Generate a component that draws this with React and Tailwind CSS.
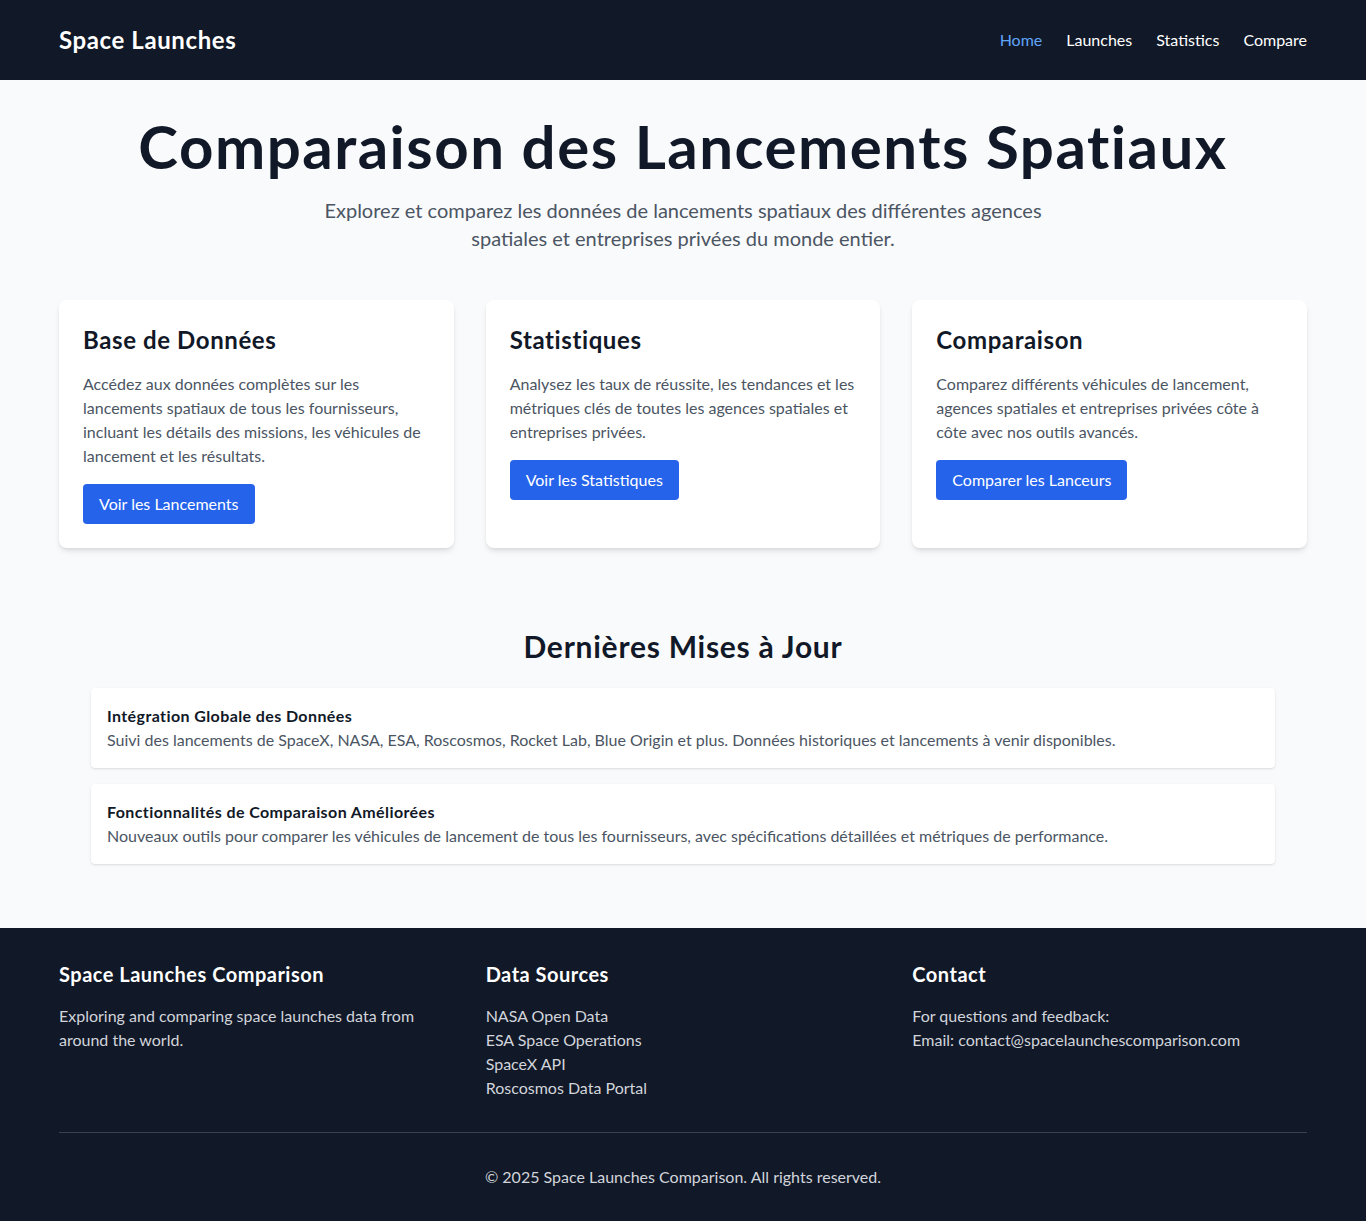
import React from 'react';

const features = [
  {
    title: 'Base de Données',
    text: 'Accédez aux données complètes sur les lancements spatiaux de tous les fournisseurs, incluant les détails des missions, les véhicules de lancement et les résultats.',
    cta: 'Voir les Lancements',
  },
  {
    title: 'Statistiques',
    text: 'Analysez les taux de réussite, les tendances et les métriques clés de toutes les agences spatiales et entreprises privées.',
    cta: 'Voir les Statistiques',
  },
  {
    title: 'Comparaison',
    text: 'Comparez différents véhicules de lancement, agences spatiales et entreprises privées côte à côte avec nos outils avancés.',
    cta: 'Comparer les Lanceurs',
  },
];

const updates = [
  {
    title: 'Intégration Globale des Données',
    text: 'Suivi des lancements de SpaceX, NASA, ESA, Roscosmos, Rocket Lab, Blue Origin et plus. Données historiques et lancements à venir disponibles.',
  },
  {
    title: 'Fonctionnalités de Comparaison Améliorées',
    text: 'Nouveaux outils pour comparer les véhicules de lancement de tous les fournisseurs, avec spécifications détaillées et métriques de performance.',
  },
];

function App() {
  return (
    <div className="min-h-screen flex flex-col bg-[#f9fafb] font-['Lato',sans-serif]">
      {/* Navbar */}
      <nav className="bg-[#111827] text-white">
        <div className="max-w-7xl mx-auto px-4 h-20 flex items-center justify-between">
          <a href="#" className="text-2xl font-bold tracking-wide">Space Launches</a>
          <div className="flex space-x-6">
            <a href="#" className="text-[#60a5fa]">Home</a>
            <a href="#" className="hover:text-[#60a5fa]">Launches</a>
            <a href="#" className="hover:text-[#60a5fa]">Statistics</a>
            <a href="#" className="hover:text-[#60a5fa]">Compare</a>
          </div>
        </div>
      </nav>

      <main className="flex-1 max-w-7xl w-full mx-auto px-4 pt-9 pb-16">
        {/* Hero */}
        <div className="text-center mb-12">
          <h1 className="text-6xl font-bold tracking-wide text-[#111827] mb-5">Comparaison des Lancements Spatiaux</h1>
          <p className="text-xl text-[#4b5563] max-w-3xl mx-auto">
            Explorez et comparez les données de lancements spatiaux des différentes agences spatiales et entreprises privées du monde entier.
          </p>
        </div>

        {/* Feature cards */}
        <div className="grid grid-cols-3 gap-8">
          {features.map((f) => (
            <div key={f.title} className="bg-white p-6 rounded-lg shadow-md">
              <h2 className="text-2xl font-bold tracking-wide text-[#111827] mb-4">{f.title}</h2>
              <p className="text-[#4b5563] mb-4">{f.text}</p>
              <a href="#" className="inline-block bg-[#2563eb] text-white px-4 py-2 rounded hover:bg-[#1d4ed8]">{f.cta}</a>
            </div>
          ))}
        </div>

        {/* Updates */}
        <section className="mt-20 px-8">
          <h2 className="text-3xl font-bold tracking-wide text-[#111827] text-center mb-6">Dernières Mises à Jour</h2>
          <div className="space-y-4">
            {updates.map((u) => (
              <div key={u.title} className="bg-white p-4 rounded shadow-sm">
                <h3 className="font-bold tracking-wide text-[#111827]">{u.title}</h3>
                <p className="text-[#4b5563]">{u.text}</p>
              </div>
            ))}
          </div>
        </section>
      </main>

      {/* Footer */}
      <footer className="bg-[#111827] text-white">
        <div className="max-w-7xl mx-auto px-4 py-8">
          <div className="grid grid-cols-3 gap-8">
            <div>
              <h3 className="text-xl font-bold tracking-wide mb-4">Space Launches Comparison</h3>
              <p className="text-[#d1d5db]">Exploring and comparing space launches data from around the world.</p>
            </div>
            <div>
              <h3 className="text-xl font-bold tracking-wide mb-4">Data Sources</h3>
              <ul className="text-[#d1d5db]">
                <li>NASA Open Data</li>
                <li>ESA Space Operations</li>
                <li>SpaceX API</li>
                <li>Roscosmos Data Portal</li>
              </ul>
            </div>
            <div>
              <h3 className="text-xl font-bold tracking-wide mb-4">Contact</h3>
              <p className="text-[#d1d5db]">For questions and feedback:</p>
              <p className="text-[#d1d5db]">Email: contact@spacelaunchescomparison.com</p>
            </div>
          </div>
          <div className="border-t border-[#374151] mt-8 pt-8 text-center text-[#d1d5db]">
            <p>© 2025 Space Launches Comparison. All rights reserved.</p>
          </div>
        </div>
      </footer>
    </div>
  );
}

export default App;
